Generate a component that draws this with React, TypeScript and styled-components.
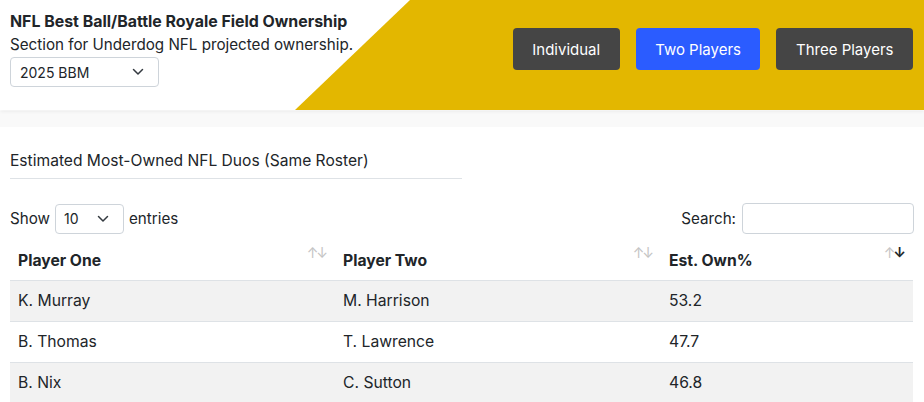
import React from "react";
import styled, { createGlobalStyle } from "styled-components";

const Global = createGlobalStyle`
  html, body { margin: 0; padding: 0; background: #fff; }
  body {
    font-family: Inter, "Noto Sans", "Liberation Sans", sans-serif;
    color: #212529;
    font-size: 16px;
  }
  * { box-sizing: border-box; }
`;

const Header = styled.header`
  position: relative;
  height: 110px;
  display: flex;
  justify-content: space-between;
  background: #fff;
  box-shadow: 0 1px 4px rgba(0, 0, 0, 0.08);
  &::before {
    content: "";
    position: absolute;
    inset: 0;
    background: #e3b700;
    clip-path: polygon(410px 0, 100% 0, 100% 100%, 295px 100%);
  }
`;

const Brand = styled.div`
  position: relative;
  padding: 10px 0 0 10px;
  display: flex;
  flex-direction: column;
  align-items: flex-start;
`;

const Title = styled.h1`
  margin: 0;
  font-size: 15.9px;
  font-weight: 700;
  line-height: 24px;
`;

const Subtitle = styled.p`
  margin: 0;
  font-size: 15.2px;
  line-height: 21px;
`;

const Select = styled.div<{ $w: number; $h: number }>`
  width: ${(p) => p.$w}px;
  height: ${(p) => p.$h}px;
  border: 1px solid #ced4da;
  border-radius: 4px;
  display: flex;
  align-items: center;
  justify-content: space-between;
  padding: 0 14px 0 ${(p) => (p.$w > 100 ? 9 : 8)}px;
  font-size: 14px;
  background: #fff;
  color: #212529;
`;

const HeaderSelect = styled(Select)`
  margin-top: 2px;
`;

const Nav = styled.nav`
  position: relative;
  display: flex;
  gap: 16px;
  padding: 28px 11px 0 0;
  align-items: flex-start;
`;

const NavButton = styled.button<{ $active?: boolean }>`
  height: 42px;
  padding: 0 19.5px;
  border: none;
  border-radius: 4px;
  background: ${(p) => (p.$active ? "#2b5cff" : "#454545")};
  color: #fff;
  font-family: inherit;
  font-size: 15px;
`;

const Band = styled.div`
  height: 16px;
  background: #f9f9f9;
  margin-top: 1px;
`;

const Content = styled.main`
  padding: 0 10px;
`;

const SectionHead = styled.h2`
  width: 452px;
  margin: 23px 0 0;
  font-size: 15.6px;
  font-weight: 400;
  line-height: 22px;
  padding-bottom: 6px;
  border-bottom: 1px solid #dee2e6;
`;

const Controls = styled.div`
  display: flex;
  justify-content: space-between;
  align-items: center;
  margin-top: 24px;
  height: 31px;
`;

const Label = styled.label<{ $gap: number }>`
  display: flex;
  align-items: center;
  gap: ${(p) => p.$gap}px;
  font-size: 15.2px;
`;

const SearchInput = styled.div`
  width: 172px;
  height: 31px;
  border: 1px solid #ced4da;
  border-radius: 4px;
`;

const Table = styled.table`
  margin-top: 5px;
  width: 903px;
  border-collapse: collapse;
  table-layout: fixed;
`;

const Th = styled.th<{ $w: number }>`
  position: relative;
  width: ${(p) => p.$w}px;
  height: 41px;
  text-align: left;
  padding: 3px 8px 0;
  font-size: 15.7px;
  font-weight: 700;
  border-bottom: 1px solid #dee2e6;
`;

const SortIcons = styled.span`
  position: absolute;
  right: 9px;
  top: 5px;
  font-size: 14px;
  font-weight: 400;
  letter-spacing: -2px;
`;

const Arrow = styled.span<{ $on?: boolean }>`
  color: ${(p) => (p.$on ? "#212529" : "#c4c4c4")};
  font-weight: ${(p) => (p.$on ? 700 : 400)};
`;

const Tr = styled.tr<{ $striped: boolean }>`
  background: ${(p) => (p.$striped ? "#f2f2f2" : "#fff")};
`;

const Td = styled.td`
  height: 41px;
  padding: 0 8px;
  font-size: 15.7px;
  border-bottom: 1px solid #dee2e6;
`;

const Chevron = () => (
  <svg width="12" height="8" viewBox="0 0 12 8" fill="none">
    <path d="M1.5 1.5l4.5 4.5 4.5-4.5" stroke="#343a40" strokeWidth="1.5" strokeLinecap="round" strokeLinejoin="round" />
  </svg>
);

const rows = [
  ["K. Murray", "M. Harrison", "53.2"],
  ["B. Thomas", "T. Lawrence", "47.7"],
  ["B. Nix", "C. Sutton", "46.8"],
];

const cols: [string, number, boolean][] = [
  ["Player One", 325, false],
  ["Player Two", 326, false],
  ["Est. Own%", 252, true],
];

export default function App() {
  return (
    <>
      <Global />
      <Header>
        <Brand>
          <Title>NFL Best Ball/Battle Royale Field Ownership</Title>
          <Subtitle>Section for Underdog NFL projected ownership.</Subtitle>
          <HeaderSelect $w={149} $h={30}>
            <span>2025 BBM</span>
            <Chevron />
          </HeaderSelect>
        </Brand>
        <Nav>
          <NavButton>Individual</NavButton>
          <NavButton $active>Two Players</NavButton>
          <NavButton>Three Players</NavButton>
        </Nav>
      </Header>
      <Band />
      <Content>
        <SectionHead>Estimated Most-Owned NFL Duos (Same Roster)</SectionHead>
        <Controls>
          <Label $gap={5}>
            Show
            <Select $w={69} $h={30}>
              <span>10</span>
              <Chevron />
            </Select>
            entries
          </Label>
          <Label $gap={6}>
            Search:
            <SearchInput />
          </Label>
        </Controls>
        <Table>
          <thead>
            <tr>
              {cols.map(([name, w, sorted]) => (
                <Th key={name} $w={w}>
                  {name}
                  <SortIcons>
                    <Arrow>↑</Arrow>
                    <Arrow $on={sorted}>↓</Arrow>
                  </SortIcons>
                </Th>
              ))}
            </tr>
          </thead>
          <tbody>
            {rows.map((r, i) => (
              <Tr key={i} $striped={i % 2 === 0}>
                {r.map((c, j) => (
                  <Td key={j}>{c}</Td>
                ))}
              </Tr>
            ))}
          </tbody>
        </Table>
      </Content>
    </>
  );
}
